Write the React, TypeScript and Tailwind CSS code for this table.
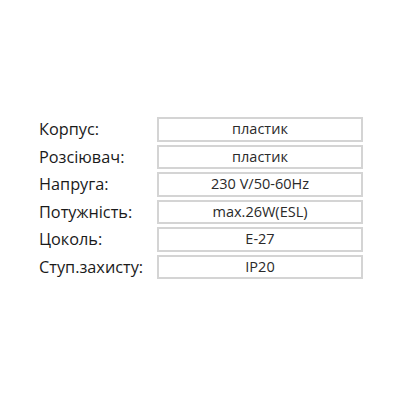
import React from "react";

const rows: [string, string][] = [
  ["Корпус:", "пластик"],
  ["Розсіювач:", "пластик"],
  ["Напруга:", "230 V/50-60Hz"],
  ["Потужність:", "max.26W(ESL)"],
  ["Цоколь:", "E-27"],
  ["Ступ.захисту:", "IP20"],
];

export default function App() {
  return (
    <div
      className="w-[400px] h-[400px] bg-white pt-[117px] pl-[39px]"
      style={{ fontFamily: '"Open Sans", "Noto Sans", sans-serif' }}
    >
      <div className="flex flex-col gap-[3px]">
        {rows.map(([k, v]) => (
          <div key={k} className="flex items-center h-[24.5px]">
            <div className="w-[118px] text-[16.3px] text-[#1a1a1a] leading-none">{k}</div>
            <div className="w-[206px] h-full border-2 border-[#d4d4d4] flex items-center justify-center text-[14.5px] text-[#2a2a2a] leading-none">
              {v}
            </div>
          </div>
        ))}
      </div>
    </div>
  );
}
